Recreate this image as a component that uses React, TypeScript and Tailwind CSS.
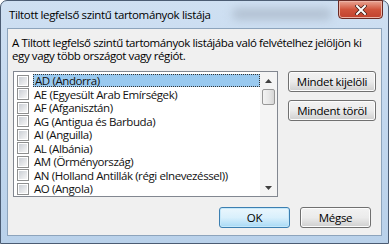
import React from 'react'

const countries = [
  'AD (Andorra)',
  'AE (Egyesült Arab Emírségek)',
  'AF (Afganisztán)',
  'AG (Antigua és Barbuda)',
  'AI (Anguilla)',
  'AL (Albánia)',
  'AM (Örményország)',
  'AN (Holland Antillák (régi elnevezéssel))',
  'AO (Angola)',
]

function Checkbox() {
  return (
    <span className="flex h-[12px] w-[12px] shrink-0 items-center justify-center border border-[#8e8f8f] bg-white">
      <span className="h-[8px] w-[8px] bg-gradient-to-br from-[#cbcfd5] to-[#f6f6f6]" />
    </span>
  )
}

function WinButton({ label, primary }: { label: string; primary?: boolean }) {
  return (
    <button
      className={
        'flex h-[21px] w-[71px] items-center justify-center rounded-[3px] border text-[11.5px] tracking-[-0.3px] text-black ' +
        (primary
          ? 'border-[#3c7fb1] bg-gradient-to-b from-[#eaf6fd] via-[#d9f0fc] to-[#a7d9f5] shadow-[inset_0_0_0_1px_#c5e8fa]'
          : 'border-[#707070] bg-gradient-to-b from-[#f2f2f2] via-[#ebebeb] to-[#cfcfcf] shadow-[inset_0_0_0_1px_#fcfcfc]')
      }
    >
      {label}
    </button>
  )
}

export default function App() {
  return (
    <div
      className="h-[244px] w-[389px] overflow-hidden bg-white"
      style={{ fontFamily: '"Open Sans", "Noto Sans", sans-serif' }}
    >
      <div className="relative flex h-full w-full flex-col rounded-t-[7px] border border-[#4b5c73] bg-gradient-to-b from-[#cfe0f2] via-[#c2d7ee] to-[#b9d1ea] px-[6px] pb-[7px]">
        {/* title bar */}
        <div className="relative flex h-[27px] shrink-0 items-center pl-[2px]">
          <span className="text-[11.5px] tracking-[-0.35px] text-black">Tiltott legfelső szintű tartományok listája</span>
          <div className="absolute left-[225px] top-[7px] h-[12px] w-[100px] rounded-full bg-[#b3c2d3] blur-[4px]" />
          <div className="absolute right-[-1px] top-[-1px] flex h-[19px] w-[45px] items-center justify-center rounded-b-[4px] border border-[#6b2a24] bg-gradient-to-b from-[#e8a493] via-[#d0543c] to-[#c0412e] shadow-[inset_0_0_0_1px_#ecb3a6]">
            <svg width="12" height="10" viewBox="0 0 12 10">
              <path d="M2 1 L10 9 M10 1 L2 9" stroke="#3b1a14" strokeWidth="3.4" strokeLinecap="square" />
              <path d="M2 1 L10 9 M10 1 L2 9" stroke="#ffffff" strokeWidth="2" strokeLinecap="square" />
            </svg>
          </div>
        </div>

        {/* client area */}
        <div className="flex flex-1 flex-col border border-[#8da4bc] bg-[#f0f0f0] px-[4px] pt-[7px]">
          <p className="whitespace-nowrap text-[11.5px] leading-[13px] tracking-[-0.4px] text-black">
            A Tiltott legfelső szintű tartományok listájába való felvételhez jelöljön ki
            <br />
            egy vagy több országot vagy régiót.
          </p>

          <div className="mt-[9px] flex">
            {/* list */}
            <div className="ml-[1px] flex h-[126px] w-[265px] border border-[#828790] bg-white">
              <div className="flex flex-1 flex-col pt-[2px]">
                {countries.map((c, i) => (
                  <div key={c} className="flex h-[13.5px] items-center">
                    <div className="flex w-[15px] justify-end">
                      <Checkbox />
                    </div>
                    <span
                      className={
                        'ml-[4px] flex h-[13px] flex-1 items-center whitespace-nowrap pl-[1px] text-[11.5px] leading-[13px] tracking-[-0.4px] text-[#111] ' +
                        (i === 0 ? 'border border-dotted border-[#333] bg-[#99c9ef]' : '')
                      }
                    >
                      {c}
                    </span>
                  </div>
                ))}
              </div>
              {/* scrollbar */}
              <div className="flex w-[17px] shrink-0 flex-col items-center bg-[#f4f4f4]">
                <div className="flex h-[17px] items-center justify-center">
                  <svg width="7" height="4" viewBox="0 0 7 4">
                    <path d="M0 4 L3.5 0 L7 4 Z" fill="#404040" />
                  </svg>
                </div>
                <div className="h-[16px] w-[13px] rounded-[2px] border border-[#979797] bg-gradient-to-r from-[#f3f3f3] via-[#e8e8e8] to-[#d6d6d6]" />
                <div className="flex-1" />
                <div className="flex h-[17px] items-center justify-center">
                  <svg width="7" height="4" viewBox="0 0 7 4">
                    <path d="M0 0 L3.5 4 L7 0 Z" fill="#404040" />
                  </svg>
                </div>
              </div>
            </div>

            {/* side buttons */}
            <div className="ml-[10px] flex flex-col gap-[8px]">
              <button className="flex h-[21px] w-[88px] items-center justify-center rounded-[3px] border border-[#707070] bg-gradient-to-b from-[#f2f2f2] via-[#ebebeb] to-[#cfcfcf] text-[11.5px] tracking-[-0.3px] text-black shadow-[inset_0_0_0_1px_#fcfcfc]">
                Mindet kijelöli
              </button>
              <button className="flex h-[21px] w-[88px] items-center justify-center rounded-[3px] border border-[#707070] bg-gradient-to-b from-[#f2f2f2] via-[#ebebeb] to-[#cfcfcf] text-[11.5px] tracking-[-0.3px] text-black shadow-[inset_0_0_0_1px_#fcfcfc]">
                Mindent töröl
              </button>
            </div>
          </div>

          <div className="mt-[10px] flex justify-end gap-[10px] pr-[6px]">
            <WinButton label="OK" primary />
            <WinButton label="Mégse" />
          </div>
        </div>
      </div>
    </div>
  )
}
